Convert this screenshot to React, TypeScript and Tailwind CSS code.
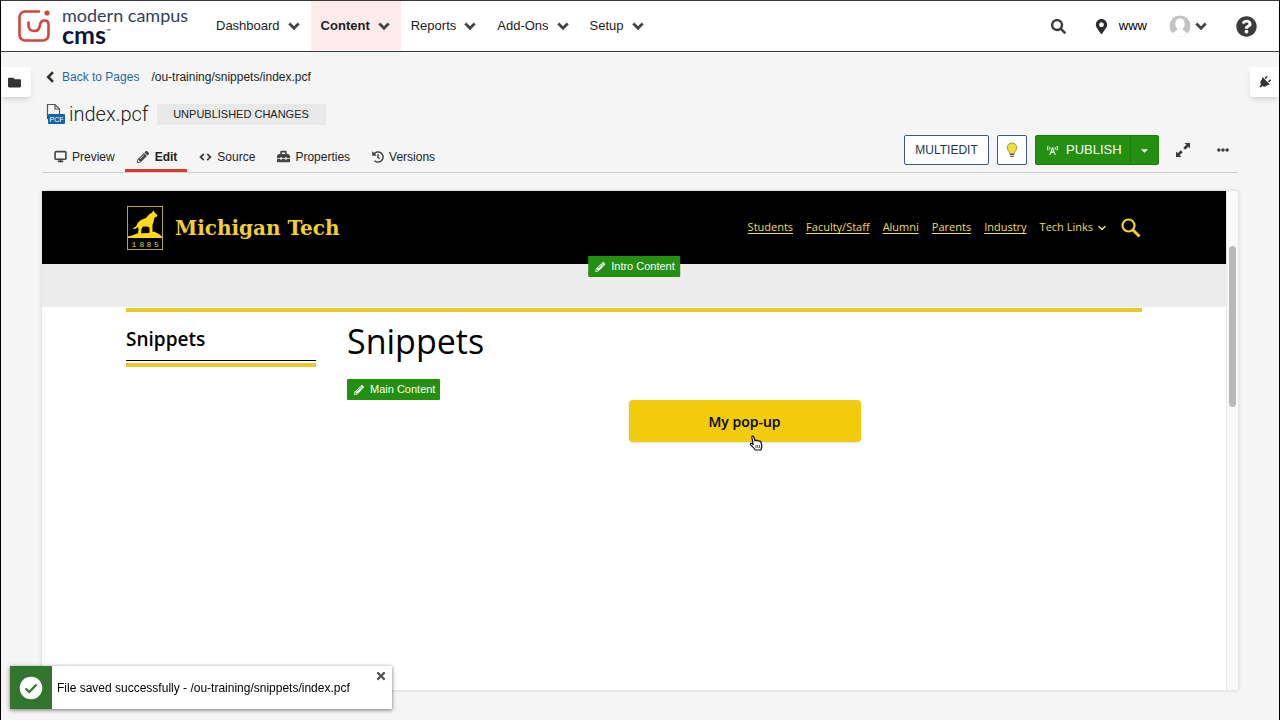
import React from "react";
import {
  FaBroadcastTower,
  FaCaretDown,
  FaEllipsisH,
  FaFolder,
  FaHistory,
  FaMapMarkerAlt,
  FaPencilAlt,
  FaPlug,
  FaQuestionCircle,
  FaSearch,
  FaTimes,
  FaToolbox,
} from "react-icons/fa";
import { ChevronDown, Monitor } from "lucide-react";
import { clsx } from "clsx";

const menus = ["Dashboard", "Content", "Reports", "Add-Ons", "Setup"];

const tabs = [
  { label: "Preview", icon: <Monitor size={13} strokeWidth={3} /> },
  { label: "Edit", icon: <FaPencilAlt size={12} className="mr-px" /> },
  { label: "Source", icon: <SourceIcon /> },
  { label: "Properties", icon: <FaToolbox size={13} /> },
  { label: "Versions", icon: <FaHistory size={12} /> },
];

const siteLinks = ["Students", "Faculty/Staff", "Alumni", "Parents", "Industry"];

function SourceIcon() {
  return (
    <svg
      width="13"
      height="12"
      viewBox="0 0 13 12"
      fill="none"
      stroke="currentColor"
      strokeWidth="1.9"
    >
      <path d="M4.800 2.800L1.600 6L4.800 9.200M8.200 2.800L11.400 6L8.200 9.200" />
    </svg>
  );
}

function MenuChevron() {
  return (
    <svg
      width="12"
      height="12"
      viewBox="0 0 12 12"
      fill="none"
      stroke="#444"
      strokeWidth="2.8"
    >
      <path d="M1.300 3.600L6 8.200L10.700 3.600" />
    </svg>
  );
}

function BackChevron() {
  return (
    <svg
      width="11"
      height="12"
      viewBox="0 0 11 12"
      fill="none"
      stroke="#333"
      strokeWidth="2.6"
    >
      <path d="M8 1.200L3.200 6L8 10.800" />
    </svg>
  );
}

function CheckIcon() {
  return (
    <svg width="24" height="24" viewBox="0 0 24 24">
      <circle cx="12" cy="12" r="11.300" fill="#fff" />
      <path
        d="M6.500 12.500L10.300 16L17.500 8.500"
        fill="none"
        stroke="#31752f"
        strokeWidth="2.200"
      />
    </svg>
  );
}

function CampusMark() {
  return (
    <svg
      width="32"
      height="32"
      viewBox="0 0 32 32"
      fill="none"
      stroke="#d2453c"
      strokeWidth="2.6"
      strokeLinecap="round"
    >
      <path d="M21 1.500H7A5.500 5.500 0 0 0 1.500 7V25A5.500 5.500 0 0 0 7 30.500H25A5.500 5.500 0 0 0 30.500 25V14.500C30.500 12 28.800 10.500 26.500 10.500C23.500 10.500 22.300 12.500 22 15C21.600 18.500 19.500 21 16.300 21C12.500 21 10.500 18.500 10.500 15.500V12.500" />
      <circle cx="29" cy="3" r="2.600" fill="#d2453c" stroke="none" />
    </svg>
  );
}

function HuskyMark() {
  return (
    <svg width="36" height="44" viewBox="0 0 36 44">
      <rect x="0.500" y="0.500" width="35" height="43" fill="none" stroke="#b5a53c" />
      <path
        fill="#ffd91a"
        d="M1 32V30.500L5 29.500L10 27.500L22 27L27 25.500L32 28L35 30.500V32Z"
      />
      <path
        fill="#ffd91a"
        d="M5.500 22.500L9 20.500L11 16.500L14 14L19 12L22 8.500L25 6.500L26.500 4.500L28 7L30.500 9L29.500 11L27.500 11.500L26.500 16L25.500 19V27H22.500V21.500L20 20.500L16 20.500L14.500 23L14 28H11L11.500 23.500L11 21L8 23Z"
      />
      <text
        x="4.500 12.500 19.500 27"
        y="41"
        fill="#e0cf6a"
        fontFamily="Liberation Mono, monospace"
        fontSize="8"
      >
        1885
      </text>
    </svg>
  );
}

function PcfIcon() {
  return (
    <svg width="20" height="22" viewBox="0 0 20 22">
      <path
        d="M1.500 16V1.500H9L13.500 6V11M9 1.500V6H13.500"
        fill="none"
        stroke="#555"
        strokeWidth="1.200"
      />
      <rect x="2" y="11" width="17" height="10" rx="1" fill="#14659f" />
      <text
        x="10.500"
        y="19"
        textAnchor="middle"
        fill="#fff"
        fontFamily="Liberation Sans, sans-serif"
        fontSize="7"
      >
        PCF
      </text>
    </svg>
  );
}

function BulbIcon() {
  return (
    <svg width="12" height="16" viewBox="0 0 12 16">
      <path
        d="M6 1C3.200 1 1.200 3 1.200 5.600C1.200 8 3.300 8.800 3.600 11.500H8.400C8.700 8.800 10.800 8 10.800 5.600C10.800 3 8.800 1 6 1Z"
        fill="#f0e13a"
        stroke="#99902f"
        strokeWidth="0.900"
      />
      <path d="M3.700 12.500H8.300M4.200 14.300H7.800" stroke="#555" strokeWidth="1.200" />
    </svg>
  );
}

function ExpandIcon() {
  return (
    <svg width="16" height="16" viewBox="0 0 16 16" fill="#3c3c3c">
      <path d="M9.500 1H15V6.500L13.200 4.700L10.200 7.700L8.300 5.800L11.300 2.800ZM6.500 15H1V9.500L2.800 11.300L5.800 8.300L7.700 10.200L4.700 13.200Z" />
    </svg>
  );
}

function Avatar() {
  return (
    <svg width="22" height="22" viewBox="0 0 22 22">
      <defs>
        <clipPath id="avatar-clip">
          <circle cx="11" cy="11" r="10.500" />
        </clipPath>
      </defs>
      <g clipPath="url(#avatar-clip)">
        <rect width="22" height="22" fill="#c3c3c3" />
        <path
          d="M11 3.500C8 3.500 6.300 5.700 6.300 8.800C6.300 11 7.200 12.900 8.400 13.900C8.400 16 4 16 3 20V22H19V20C18 16 13.600 16 13.600 13.900C14.800 12.900 15.700 11 15.700 8.800C15.700 5.700 14 3.500 11 3.500Z"
          fill="#fff"
        />
      </g>
    </svg>
  );
}

function HandCursor() {
  return (
    <svg
      width="14"
      height="16"
      viewBox="0 0 14 16"
      className="pointer-events-none absolute top-[35px] left-[120px]"
    >
      <path
        d="M4.200 9.500L2.800 2.200C2.600 1 4.300 .600 4.700 1.800L6 6C6.100 5 7.700 4.900 8 6C8.300 5.200 9.700 5.300 10 6.400C10.400 5.800 11.600 6 11.900 7L12.800 10.500C13.100 12 12.300 13.500 11.800 15H6.300C5.300 13 3.800 12.300 1.700 9.900C.600 8.500 2 7.600 3 8.500Z"
        fill="#fff"
        stroke="#111"
        strokeWidth="1.200"
        strokeLinejoin="round"
      />
      <path d="M7 10V13M8.800 10V13M10.600 10V13" stroke="#111" strokeWidth="0.700" />
    </svg>
  );
}

function RegionButton({
  label,
  className,
}: {
  label: string;
  className?: string;
}) {
  return (
    <button
      type="button"
      className={clsx(
        "flex h-[21px] items-center gap-[6px] rounded-[1px] bg-[#24900f] pr-[5px] pl-[7px] text-[11px] whitespace-nowrap text-white",
        className,
      )}
    >
      <FaPencilAlt size={10} />
      {label}
    </button>
  );
}

function TopBar() {
  return (
    <header className="flex h-[51px] shrink-0 items-center border-b border-[#3a3a3a] bg-white pr-[22px] pl-[17px]">
      <a href="#" className="flex w-[188px] items-center gap-3">
        <CampusMark />
        <span className="flex flex-col font-['Lato',sans-serif] text-[#0d1538]">
          <span className="h-4 text-[18px] leading-[14px] text-[#33415c]">
            modern campus
          </span>
          <span className="flex h-5 items-start text-[25px] leading-[20px] font-bold">
            cms
            <span className="text-[6px] leading-[14px] font-normal">™</span>
          </span>
        </span>
      </a>
      <nav className="flex self-stretch pb-px">
        {menus.map((menu) => (
          <button
            key={menu}
            type="button"
            className={clsx(
              "flex items-center gap-2 pr-[11px] pl-[10px] text-[13px] text-[#1c1c1c]",
              menu === "Content" && "bg-[#fdeaea] font-bold",
            )}
          >
            {menu}
            <MenuChevron />
          </button>
        ))}
      </nav>
      <div className="ml-auto flex items-center text-[#3c3c3c]">
        <button type="button" aria-label="Search" className="mr-7">
          <FaSearch size={15} />
        </button>
        <button
          type="button"
          className="mr-[22px] flex items-center gap-[10px] text-[13px] text-black"
        >
          <FaMapMarkerAlt size={15} className="text-[#2c2c2c]" />
          www
        </button>
        <button
          type="button"
          aria-label="Account"
          className="mr-[29px] flex items-center gap-1"
        >
          <Avatar />
          <MenuChevron />
        </button>
        <button type="button" aria-label="Help">
          <FaQuestionCircle size={21} />
        </button>
      </div>
    </header>
  );
}

function Toolbar() {
  return (
    <div className="flex h-[47px] justify-between border-b border-[#cfcfcf]">
      <div className="flex h-7 self-end">
        {tabs.map((tab) => (
          <button
            key={tab.label}
            type="button"
            className={clsx(
              "flex items-center gap-[5px] border-b-3 pr-[10px] pl-3 text-[12px] text-[#222]",
              tab.label === "Edit"
                ? "border-[#d83a2e] font-bold"
                : "border-transparent",
            )}
          >
            <span className="text-[#444]">{tab.icon}</span>
            {tab.label}
          </button>
        ))}
      </div>
      <div className="flex items-start gap-2 pt-[9px] pr-2 text-[#3c3c3c]">
        <button
          type="button"
          className="h-[30px] w-[85px] rounded-[2px] border border-[#3d5878] bg-white text-[12px] text-[#26354c]"
        >
          MULTIEDIT
        </button>
        <button
          type="button"
          aria-label="Tips"
          className="flex h-[30px] w-[30px] items-center justify-center rounded-[2px] border border-[#3d5878] bg-white"
        >
          <BulbIcon />
        </button>
        <div className="flex h-[30px] overflow-hidden rounded-[2px] border border-[#1f7d0e] bg-[#24900f] text-[13px] text-white">
          <button
            type="button"
            className="flex w-[95px] items-center gap-2 border-r border-[#1f7d0e] pl-[11px]"
          >
            <FaBroadcastTower size={11} />
            PUBLISH
          </button>
          <button
            type="button"
            aria-label="Publish options"
            className="flex w-[27px] items-center justify-center"
          >
            <FaCaretDown size={11} />
          </button>
        </div>
        <button
          type="button"
          aria-label="Full screen"
          className="ml-2 flex h-[30px] items-center"
        >
          <ExpandIcon />
        </button>
        <button
          type="button"
          aria-label="More"
          className="mr-px ml-[18px] flex h-[30px] items-center"
        >
          <FaEllipsisH size={12} />
        </button>
      </div>
    </div>
  );
}

function SitePage() {
  return (
    <div className="min-w-0 flex-1 bg-white font-['Open_Sans','Noto_Sans',sans-serif] text-black">
      <div className="flex h-[73px] items-center justify-between bg-black px-[85px]">
        <a href="#" className="flex items-center gap-3">
          <HuskyMark />
          <span className="font-['DejaVu_Serif',serif] text-[20px] font-bold whitespace-nowrap text-[#f3cf2c]">
            Michigan Tech
          </span>
        </a>
        <nav className="flex items-center gap-[13px] text-[11px] text-[#f0dc5a]">
          {siteLinks.map((link) => (
            <a key={link} href="#" className="underline underline-offset-2">
              {link}
            </a>
          ))}
          <button type="button" className="flex items-center gap-[3px]">
            Tech Links
            <ChevronDown size={12} strokeWidth={3} />
          </button>
          <button type="button" aria-label="Search site">
            <svg
              width="20"
              height="20"
              viewBox="0 0 20 20"
              fill="none"
              stroke="#f5d130"
            >
              <circle cx="7.500" cy="7.500" r="6" strokeWidth="2.200" />
              <path d="M12 12L18.500 18.500" strokeWidth="3" />
            </svg>
          </button>
        </nav>
      </div>
      <div className="relative h-[43px] bg-[#ececec]">
        <RegionButton
          label="Intro Content"
          className="absolute -top-2 left-1/2 -translate-x-1/2 font-['Liberation_Sans',sans-serif]"
        />
      </div>
      <div className="px-[84px] pt-px">
        <div className="flex gap-[31px] border-t-4 border-[#eac92d]">
          <aside className="w-[190px]">
            <h2 className="border-b border-black pt-[14px] pb-[7px] text-[19px] leading-[27px] font-semibold">
              Snippets
            </h2>
            <div className="mt-[2px] h-1 bg-[#eac92d]" />
          </aside>
          <main className="flex-1">
            <h1 className="pt-2 text-[34px] leading-[42px]">Snippets</h1>
            <RegionButton
              label="Main Content"
              className="mt-[17px] font-['Liberation_Sans',sans-serif]"
            />
            <div className="relative mx-auto w-[232px]">
              <button
                type="button"
                className="h-[42px] w-full rounded-[4px] bg-[#f1cb0c] text-[14px] font-semibold shadow-sm"
              >
                My pop-up
              </button>
              <HandCursor />
            </div>
          </main>
        </div>
      </div>
    </div>
  );
}

function Toast() {
  return (
    <div
      role="status"
      className="fixed bottom-[11px] left-[10px] flex h-[43px] w-[382px] items-center bg-white shadow-[0_1px_4px_rgba(0,0,0,0.55)]"
    >
      <span className="flex w-[42px] items-center justify-center self-stretch bg-[#31752f]">
        <CheckIcon />
      </span>
      <span className="ml-[5px] text-[12px] text-black">
        File saved successfully - /ou-training/snippets/index.pcf
      </span>
      <button
        type="button"
        aria-label="Close"
        className="mt-1 mr-[5px] ml-auto self-start text-[#555]"
      >
        <FaTimes size={12} />
      </button>
    </div>
  );
}

export default function App() {
  return (
    <div className="relative flex min-h-screen flex-col border-x border-t border-x-black border-t-[#3a3a3a] bg-[#f5f5f5] font-['Liberation_Sans',Arial,sans-serif]">
      <TopBar />
      <button
        type="button"
        aria-label="Files"
        className="absolute top-[66px] left-0 flex h-[30px] w-[30px] items-center rounded-r-[3px] bg-white pl-[7px] text-[#333] shadow-md"
      >
        <FaFolder size={13} />
      </button>
      <button
        type="button"
        aria-label="Gadgets"
        className="absolute top-[66px] right-0 flex h-[30px] w-[29px] items-center rounded-l-[3px] bg-white pl-2 text-[#333] shadow-md"
      >
        <FaPlug size={13} className="rotate-45" />
      </button>
      <div className="flex flex-1 flex-col px-[41px] pt-4 pb-[30px]">
        <div className="flex h-[18px] items-center text-[12px]">
          <a href="#" className="ml-[3px] flex items-center gap-[6px] text-[#1c6ba6]">
            <BackChevron />
            Back to Pages
          </a>
          <span className="ml-3 text-[#222]">/ou-training/snippets/index.pcf</span>
        </div>
        <div className="mt-4 flex h-6 items-center pl-1">
          <PcfIcon />
          <h1 className="ml-[3px] font-['Roboto',sans-serif] text-[20px] leading-6 font-light text-[#222]">
            index.pcf
          </h1>
          <span className="ml-2 flex h-[21px] w-[169px] items-center justify-center bg-[#e9e9e9] text-[11px] text-[#222]">
            UNPUBLISHED CHANGES
          </span>
        </div>
        <Toolbar />
        <div className="mt-[18px] flex flex-1 bg-[#fafafa] shadow-[0_0_4px_rgba(0,0,0,0.15)]">
          <SitePage />
          <div className="flex w-3 justify-center border-l border-[#e8e8e8]">
            <div className="mt-[55px] h-[161px] w-[7px] rounded-full bg-[#b9b9b9]" />
          </div>
        </div>
      </div>
      <Toast />
    </div>
  );
}
